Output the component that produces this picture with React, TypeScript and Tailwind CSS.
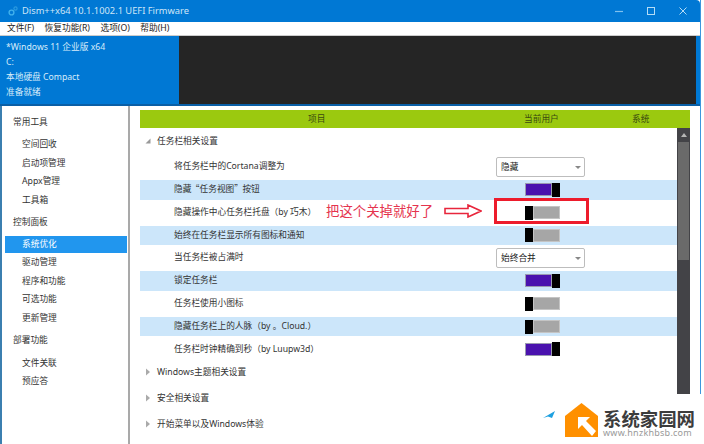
const font = { fontFamily: '"Noto Sans", "Noto Sans CJK SC", sans-serif' };

const menus = ['文件(F)', '恢复功能(R)', '选项(O)', '帮助(H)'];
const info = ['*Windows 11 企业版 x64', 'C:', '本地硬盘 Compact', '准备就绪'];

const sideGroups = [
  { title: '常用工具', items: ['空间回收', '启动项管理', 'Appx管理', '工具箱'] },
  { title: '控制面板', items: ['系统优化', '驱动管理', '程序和功能', '可选功能', '更新管理'] },
  { title: '部署功能', items: ['文件关联', '预应答'] },
];

type Row = { label: string; on?: boolean; combo?: string };

const rows: Row[] = [
  { label: '将任务栏中的Cortana调整为', combo: '隐藏' },
  { label: '隐藏 “任务视图” 按钮', on: true },
  { label: '隐藏操作中心任务栏托盘（by 巧木）', on: false },
  { label: '始终在任务栏显示所有图标和通知', on: false },
  { label: '当任务栏被占满时', combo: '始终合并' },
  { label: '锁定任务栏', on: true },
  { label: '任务栏使用小图标', on: false },
  { label: '隐藏任务栏上的人脉（by 。Cloud.）', on: false },
  { label: '任务栏时钟精确到秒（by Luupw3d）', on: true },
];

function Toggle({ on }: { on: boolean }) {
  return (
    <div className={`ml-[29px] flex h-[14px] w-[35px] items-center ${on ? 'justify-end' : 'justify-start'}`}>
      {on ? (
        <>
          <div className="h-[13px] w-[27px] border border-[#9a9ab0] bg-[#4a12ae]" />
          <div className="h-[14px] w-[8px] bg-black" />
        </>
      ) : (
        <>
          <div className="h-[14px] w-[8px] bg-black" />
          <div className="h-[13px] w-[27px] border border-[#c4c4c4] bg-[#a6a6a6]" />
        </>
      )}
    </div>
  );
}

function Combo({ text }: { text: string }) {
  return (
    <div className="flex h-[20px] w-[89px] items-center justify-between rounded-[2px] border border-[#bdbdbd] bg-white pl-[4px] pr-[3px] text-[#222]">
      <span>{text}</span>
      <span className="h-0 w-0 border-x-[3px] border-t-[3px] border-x-transparent border-t-[#888]" />
    </div>
  );
}

function Group({ title, open }: { title: string; open?: boolean }) {
  return (
    <div className="flex h-[26px] items-center pl-[5px] text-[#333]">
      {open ? (
        <svg width="6" height="6" viewBox="0 0 6 6" className="mr-[5px]">
          <path d="M5.5 .5V5.5H.5Z" fill="#999" />
        </svg>
      ) : (
        <svg width="6" height="8" viewBox="0 0 6 8" className="mr-[5px]">
          <path d="M1 0.5L5 4L1 7.5Z" fill="#aaa" />
        </svg>
      )}
      <span className="pl-[1px]">{title}</span>
    </div>
  );
}

export default function App() {
  return (
    <div className="relative h-[444px] w-[704px] overflow-hidden bg-white text-[8.7px] leading-none" style={font}>
      <div className="flex h-full w-[701px] flex-col border-r border-[#3d96dd]">
        {/* title bar */}
        <div className="flex h-[22px] shrink-0 items-center rounded-tr-[4px] bg-[#0078d4] pl-[8px] text-[9.3px] text-[#cfe6f7]">
          <svg width="10" height="10" viewBox="0 0 10 10" className="mr-[4px]">
            <circle cx="3.5" cy="6.5" r="2.4" fill="none" stroke="#3fb0ec" strokeWidth="1.4" />
            <circle cx="7.5" cy="2.5" r="1.6" fill="none" stroke="#2b9be0" strokeWidth="1.2" />
          </svg>
          <span>Dism++x64 10.1.1002.1 UEFI Firmware</span>
          <div className="ml-auto flex items-center pr-[13px]">
            <svg width="8" height="8" viewBox="0 0 8 8" className="mr-[24px]">
              <path d="M0 4.5H8" stroke="#7fc1ee" strokeWidth="1.2" />
            </svg>
            <svg width="8" height="8" viewBox="0 0 8 8" className="mr-[24px]">
              <rect x=".5" y=".5" width="7" height="7" fill="none" stroke="#b4dcf6" />
            </svg>
            <svg width="8" height="8" viewBox="0 0 8 8">
              <path d="M.5 .5L7.5 7.5M7.5 .5L.5 7.5" stroke="#b4dcf6" />
            </svg>
          </div>
        </div>

        {/* menu */}
        <div className="flex h-[14px] shrink-0 items-center gap-[10.5px] border-b border-[#ccc] bg-white pl-[7px] text-[#222]">
          {menus.map(m => (
            <span key={m}>{m}</span>
          ))}
        </div>

        {/* info strip */}
        <div className="flex h-[70px] shrink-0 border-b-2 border-[#0a5fa6] bg-[#0078d4] pr-[4px]">
          <div className="flex w-[179px] flex-col justify-center gap-[6.3px] pl-[6px] text-[#d8ecfa]">
            {info.map(t => (
              <div key={t}>{t}</div>
            ))}
          </div>
          <div className="flex-1 bg-[#252525]" />
        </div>

        <div className="flex min-h-0 flex-1">
          {/* sidebar */}
          <div className="w-[130px] shrink-0 border-x-2 border-l-[#3b7fb0] border-r-[#a9a9a9] pl-[3px] pr-[1px] pt-[11px] text-[#333]">
            {sideGroups.map(g => (
              <div key={g.title} className="mb-[8px]">
                <div className="mb-[8.5px] flex h-[10px] items-center pl-[8px]">{g.title}</div>
                {g.items.map(item => (
                  <div
                    key={item}
                    className={`flex items-center pl-[17px] ${
                      item === '系统优化' ? 'my-[1px] h-[16.5px] bg-[#2196ee] text-white' : 'h-[18.5px]'
                    }`}
                  >
                    {item}
                  </div>
                ))}
              </div>
            ))}
          </div>

          {/* settings list */}
          <div className="flex min-w-0 flex-1 flex-col pl-[10px] pr-[10px] pt-[4px]">
            <div className="grid h-[18px] shrink-0 grid-cols-[356px_132px_1fr] items-center bg-[#9bc90f] text-[#3a4a10]">
              <span className="pl-[168px]">项目</span>
              <span className="pl-[28px]">当前用户</span>
              <span className="pl-[4px]">系统</span>
            </div>
            <div className="flex min-h-0 flex-1">
              <div className="min-w-0 flex-1">
                <Group title="任务栏相关设置" open />
                {rows.map((r, i) => (
                  <div
                    key={r.label}
                    className={`grid grid-cols-[356px_1fr] items-center text-[#333] ${
                      i % 2 === 1 ? 'h-[19.6px] bg-[#cce6fa]' : 'h-[26px]'
                    }`}
                  >
                    <span
                      className={`pb-[1px] pl-[34px] ${
                        i === 1 ? "[font-family:'Noto_Sans_CJK_SC',sans-serif] [word-spacing:-2.5px]" : ''
                      }`}
                    >
                      {r.label}
                    </span>
                    {r.combo ? <Combo text={r.combo} /> : <Toggle on={!!r.on} />}
                  </div>
                ))}
                <div className="-mt-[3px]">
                  <Group title="Windows主题相关设置" />
                  <Group title="安全相关设置" />
                  <Group title="开始菜单以及Windows体验" />
                </div>
              </div>
              <div className="w-[13px] shrink-0 bg-[#434347]">
                <div className="flex h-[14px] items-center justify-center">
                  <span className="h-0 w-0 border-x-[3.5px] border-b-[4px] border-x-transparent border-b-[#b5b5b5]" />
                </div>
                <div className="mx-[1px] h-[118px] bg-[#6a6a6a]" />
              </div>
            </div>
          </div>
        </div>
      </div>

      {/* red annotation */}
      <div className="absolute left-[494px] top-[198px] h-[26px] w-[95px] border-[3px] border-[#ed1c2c]" />
      <div className="absolute left-[320px] top-[200px] bg-white px-[6px] py-[2px] text-[13.4px] leading-[18px] text-[#e5344e]">
        把这个关掉就好了
      </div>
      <svg width="38" height="14" viewBox="0 0 38 14" className="absolute left-[444px] top-[204px]">
        <path d="M1 4.5H24V1L37 7L24 13V9.5H1Z" fill="none" stroke="#e8263c" strokeWidth="1.6" />
      </svg>

      {/* watermark */}
      <div className="absolute bottom-0 right-0 flex h-[50px] w-[174px] items-start bg-white pl-[13px]">
        <svg width="12" height="8" viewBox="0 0 12 8" className="mt-[17px]">
          <path d="M0 7L12 0L9 7L5 5.5Z" fill="#1ea0e0" />
        </svg>
        <svg width="33" height="34" viewBox="0 0 33 34" className="ml-[10px] mt-[9px]">
          <path d="M16.5 0L33 13V34H0V13Z" fill="#ff9000" />
          <path d="M13 14H25L21 18L31 28L27 33L17 22L13 26Z" fill="#ffffff" />
        </svg>
        <div className="ml-[5px] mt-[15px] flex flex-col">
          <span className="text-[18.4px] font-bold leading-[19px] text-[#3c3c3c]">系统家园网</span>
          <span className="text-[9px] leading-[10px] tracking-[0.25px] text-[#999]">www.hnzkhbsb.com</span>
        </div>
      </div>
    </div>
  );
}
